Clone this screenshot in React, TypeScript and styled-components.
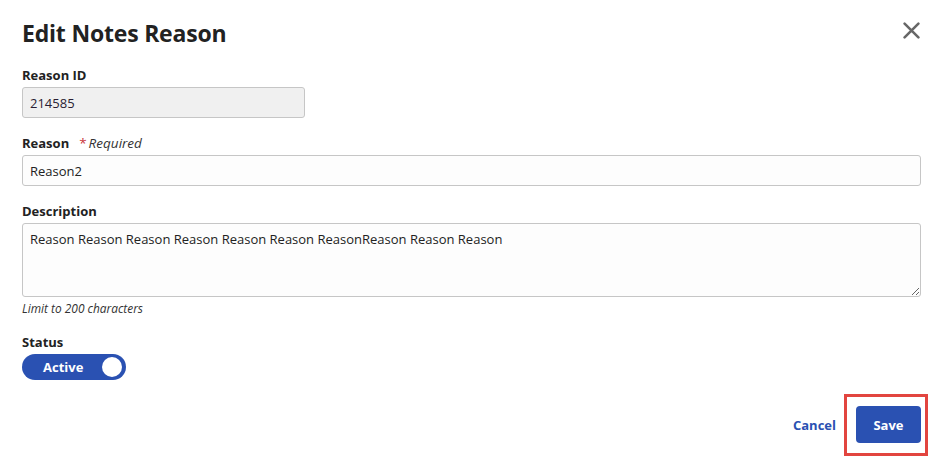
import React from "react";
import styled, { createGlobalStyle } from "styled-components";

const GlobalStyle = createGlobalStyle`
  html, body { margin: 0; padding: 0; background: #fff; }
  body { font-family: "Open Sans", "Noto Sans", Arial, sans-serif; color: #222; }
  * { box-sizing: border-box; }
`;

const Dialog = styled.div`
  width: 946px;
  height: 469px;
  background: #fff;
  padding: 17px 25px 0 22px;
  display: flex;
  flex-direction: column;
`;

const Header = styled.div`
  display: flex;
  justify-content: space-between;
  align-items: flex-start;
`;

const Title = styled.h2`
  margin: 0;
  font-size: 23px;
  letter-spacing: -0.2px;
  line-height: 32px;
  font-weight: 700;
  color: #222;
`;

const CloseButton = styled.button`
  border: none;
  background: transparent;
  padding: 0;
  margin: 2px -1px 0 0;
  width: 22px;
  height: 22px;
  display: flex;
  align-items: center;
  justify-content: center;
  cursor: pointer;
`;

const Field = styled.div<{ $mt: number }>`
  display: flex;
  flex-direction: column;
  margin-top: ${(p) => p.$mt}px;
`;

const Label = styled.label`
  font-size: 13px;
  line-height: 18px;
  font-weight: 700;
  color: #222;
  margin-bottom: 3px;
  display: flex;
  align-items: baseline;
`;

const Required = styled.span`
  font-weight: 400;
  font-style: italic;
  font-size: 13.5px;
  margin-left: 10px;
  color: #333;
  &::before {
    content: "*";
    color: #c8353a;
    font-style: normal;
    margin-right: 2px;
  }
`;

const Input = styled.input<{ $width?: string; $disabled?: boolean }>`
  width: ${(p) => p.$width || "100%"};
  height: 31px;
  border: 1px solid #c6c6c6;
  border-radius: 3px;
  background: ${(p) => (p.$disabled ? "#f0f0f0" : "#fdfdfd")};
  padding: 0 7px;
  font-family: inherit;
  font-size: 13px;
  color: ${(p) => (p.$disabled ? "#2a1d33" : "#222")};
  outline: none;
`;

const TextArea = styled.textarea`
  display: block;
  width: 100%;
  height: 74px;
  border: 1px solid #c6c6c6;
  border-radius: 3px;
  background: #fdfdfd;
  padding: 6px 7px;
  font-family: inherit;
  font-size: 13px;
  line-height: 18px;
  color: #222;
  resize: vertical;
  outline: none;
`;

const Hint = styled.div`
  margin-top: 4px;
  font-size: 11.9px;
  line-height: 15px;
  font-style: italic;
  color: #333;
`;

const Toggle = styled.button`
  width: 104px;
  height: 26px;
  border: none;
  border-radius: 13px;
  background: #2a51b2;
  display: flex;
  align-items: center;
  padding: 0 4px 0 21px;
  justify-content: space-between;
  cursor: pointer;
`;

const ToggleText = styled.span`
  color: #fff;
  font-family: "Open Sans", Arial, sans-serif;
  font-size: 13px;
  font-weight: 700;
`;

const Knob = styled.span`
  width: 20px;
  height: 20px;
  border-radius: 50%;
  background: #fff;
`;

const Footer = styled.div`
  display: flex;
  justify-content: flex-end;
  align-items: center;
  gap: 20px;
  margin-top: 26px;
`;

const LinkButton = styled.button`
  border: none;
  background: transparent;
  padding: 0;
  color: #2a51b2;
  font-family: inherit;
  font-size: 13px;
  font-weight: 700;
  cursor: pointer;
`;

const Highlight = styled.div`
  position: relative;
  &::after {
    content: "";
    position: absolute;
    top: -12px;
    bottom: -13px;
    left: -12px;
    right: -7px;
    border: 3px solid #e2453f;
    pointer-events: none;
  }
`;

const PrimaryButton = styled.button`
  width: 65px;
  height: 37px;
  border: none;
  border-radius: 4px;
  background: #2a51b2;
  color: #fff;
  font-family: inherit;
  font-size: 13px;
  font-weight: 700;
  cursor: pointer;
`;

export default function App() {
  return (
    <>
      <GlobalStyle />
      <Dialog>
        <Header>
          <Title>Edit Notes Reason</Title>
          <CloseButton aria-label="Close">
            <svg width="17" height="17" viewBox="0 0 16 16">
              <path d="M1.5 1.5 L14.5 14.5 M14.5 1.5 L1.5 14.5" stroke="#676767" strokeWidth="2.4" strokeLinecap="round" />
            </svg>
          </CloseButton>
        </Header>

        <Field $mt={17}>
          <Label>Reason ID</Label>
          <Input $width="283px" $disabled readOnly value="214585" />
        </Field>

        <Field $mt={16}>
          <Label>
            Reason <Required>Required</Required>
          </Label>
          <Input readOnly value="Reason2" />
        </Field>

        <Field $mt={16}>
          <Label>Description</Label>
          <TextArea readOnly value="Reason Reason Reason Reason Reason Reason ReasonReason Reason Reason" />
          <Hint>Limit to 200 characters</Hint>
        </Field>

        <Field $mt={17}>
          <Label>Status</Label>
          <Toggle>
            <ToggleText>Active</ToggleText>
            <Knob />
          </Toggle>
        </Field>

        <Footer>
          <LinkButton>Cancel</LinkButton>
          <Highlight>
            <PrimaryButton>Save</PrimaryButton>
          </Highlight>
        </Footer>
      </Dialog>
    </>
  );
}
